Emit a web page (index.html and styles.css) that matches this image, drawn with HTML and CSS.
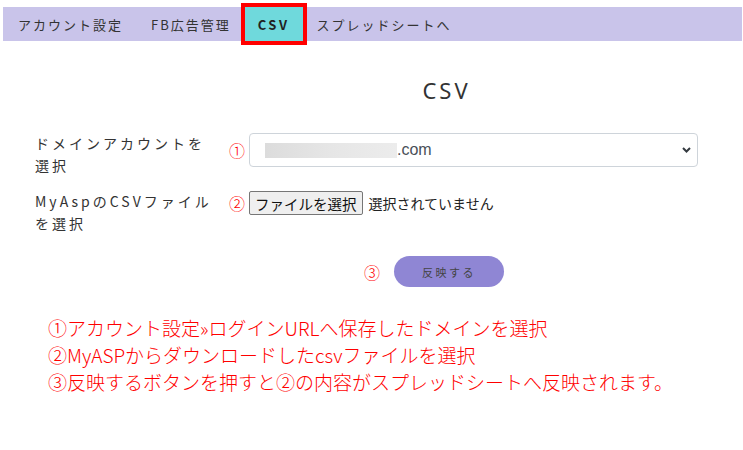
FILE: index.html
```html
<!DOCTYPE html>
<html lang="ja">
<head>
<meta charset="utf-8">
<title>CSV</title>
<link rel="stylesheet" href="styles.css">
</head>
<body>
<nav class="nav">
  <a class="nav-item">アカウント設定</a>
  <a class="nav-item">FB広告管理</a>
  <a class="nav-item active">CSV</a>
  <a class="nav-item">スプレッドシートへ</a>
</nav>

<main class="page">
  <h1 class="title">CSV</h1>

  <div class="form">
    <div class="row">
      <div class="label">ドメインアカウントを選択</div>
      <div class="control">
        <span class="mark">①</span>
        <div class="select">
          <span class="mask"></span><span class="domain">.com</span>
          <svg class="chev" width="9" height="6" viewBox="0 0 9 6"><path d="M1 1 L4.5 4.5 L8 1" fill="none" stroke="#343a40" stroke-width="2"/></svg>
        </div>
      </div>
    </div>
    <div class="row">
      <div class="label">MyAspのCSVファイルを選択</div>
      <div class="control">
        <span class="mark">②</span>
        <span class="file-btn">ファイルを選択</span>
        <span class="file-text">選択されていません</span>
      </div>
    </div>
  </div>

  <div class="submit-row">
    <span class="submit-wrap">
      <span class="mark mark-abs">③</span>
      <span class="submit">反映する</span>
    </span>
  </div>

  <div class="notes">
    <p>①アカウント設定»ログインURLへ保存したドメインを選択</p>
    <p>②MyASPからダウンロードしたcsvファイルを選択</p>
    <p>③反映するボタンを押すと②の内容がスプレッドシートへ反映されます。</p>
  </div>
</main>
</body>
</html>
```

FILE: styles.css
```css
* { box-sizing: border-box; }
body {
  margin: 0;
  font-family: "Noto Sans CJK JP", "Noto Sans", sans-serif;
  color: #333;
  background: #fff;
}
.nav {
  display: flex;
  align-items: stretch;
  height: 34px;
  margin: 7px 1px 0 3px;
  padding-left: 1px;
  background: #c9c4ea;
}
.nav-item {
  display: flex;
  align-items: center;
  padding: 0 14px;
  font-size: 13px;
  letter-spacing: 2px;
  color: #333;
}
.nav-item.active {
  background: #6fd9dc;
  font-weight: bold;
  color: #222;
  padding: 0 13px;
  letter-spacing: 2.5px;
  outline: 4px solid #f00;
}
.page {
  width: 663px;
  margin-left: 35px;
}
.title {
  margin: 34px 0 0;
  padding-left: 160px;
  text-align: center;
  font-family: "Noto Sans", sans-serif;
  font-weight: 400;
  font-size: 22px;
  line-height: 30px;
  letter-spacing: 3px;
  color: #333;
}
.form {
  margin-top: 27px;
  display: flex;
  flex-direction: column;
  gap: 14px;
}
.row {
  display: flex;
  align-items: flex-start;
}
.label {
  width: 194px;
  flex: none;
  font-size: 14px;
  line-height: 22px;
  letter-spacing: 3px;
  color: #333;
  padding-right: 8px;
}
.control {
  flex: 1;
  display: flex;
  align-items: center;
  gap: 2px;
}
.row:first-child .control { height: 34px; margin-top: 1px; }
.row:nth-child(2) .control { height: 26px; margin-top: 0; }
.mark {
  width: 18px;
  flex: none;
  color: #f00;
  font-size: 16px;
  font-weight: 300;
  line-height: 20px;
}
.select {
  flex: 1;
  height: 34px;
  border: 1px solid #ced4da;
  border-radius: 4px;
  display: flex;
  align-items: center;
  padding-left: 15px;
  padding-right: 6px;
}
.mask {
  width: 132px;
  height: 15px;
  background: linear-gradient(90deg, #dcdcdc, #e6e6e6 50%, #ececec);
}
.domain {
  font-family: "Liberation Sans", Arial, sans-serif;
  font-size: 16px;
  color: #495057;
}
.chev { margin-left: auto; }
.file-btn {
  height: 24px;
  display: inline-flex;
  align-items: center;
  padding: 0 5px;
  background: #efefef;
  border: 1px solid #767676;
  border-radius: 2px;
  font-size: 14.5px;
  color: #111;
}
.file-text {
  margin-left: 4px;
  font-size: 14px;
  color: #222;
}
.submit-row {
  margin-top: 22px;
  padding-left: 165px;
  text-align: center;
}
.submit-wrap {
  position: relative;
  display: inline-block;
}
.mark-abs {
  position: absolute;
  right: 100%;
  margin-right: 13px;
  top: 6px;
}
.submit {
  display: inline-flex;
  align-items: center;
  justify-content: center;
  width: 110px;
  height: 31px;
  border-radius: 16px;
  background: #8f86d4;
  font-size: 11px;
  letter-spacing: 2.5px;
  color: #444;
}
.notes {
  margin: 27px 0 0 13px;
  width: 700px;
  color: #f00;
  font-size: 19px;
  font-weight: 300;
  line-height: 27px;
}
.notes p { margin: 0; white-space: nowrap; }
```
